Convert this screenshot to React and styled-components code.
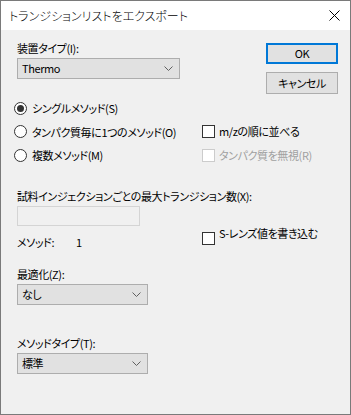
import React from "react";
import styled, { createGlobalStyle } from "styled-components";

const GlobalStyle = createGlobalStyle`
  html, body {
    margin: 0;
    padding: 0;
    background: #ffffff;
  }
  body {
    font-family: "Noto Sans CJK JP", "Noto Sans", sans-serif;
    font-size: 11px;
    font-weight: 400;
    letter-spacing: -0.4px;
    color: #000000;
    font-feature-settings: "palt";
  }
`;

const Window = styled.div`
  width: 351px;
  height: 415px;
  box-sizing: border-box;
  border: 1px solid #7a7a7a;
  background: #f0f0f0;
  display: flex;
  flex-direction: column;
`;

const TitleBar = styled.div`
  height: 29px;
  background: #ffffff;
  display: flex;
  align-items: center;
  justify-content: space-between;
  padding: 0 10px 0 8px;
  flex-shrink: 0;
`;

const Title = styled.span`
  font-size: 12px;
  font-weight: 300;
  letter-spacing: 0;
  line-height: 14px;
`;

const CloseIcon = styled.svg`
  width: 11px;
  height: 11px;
  display: block;
`;

const Body = styled.div`
  padding: 11px 12px 0 16px;
  display: flex;
  flex-direction: column;
`;

const TopRow = styled.div`
  display: flex;
  justify-content: space-between;
  align-items: flex-start;
`;

const Field = styled.div`
  display: flex;
  flex-direction: column;
  margin-top: ${(p) => p.$top || 0}px;
`;

const Label = styled.label`
  line-height: 15px;
  margin-bottom: ${(p) => p.$gap ?? 2}px;
  white-space: nowrap;
`;

const Combo = styled.div`
  width: ${(p) => p.$width}px;
  height: 21px;
  box-sizing: border-box;
  border: 1px solid #adadad;
  background: #e1e1e1;
  display: flex;
  align-items: center;
  justify-content: space-between;
  padding: 0 6px 0 4px;
`;

const ComboText = styled.span`
  line-height: 15px;
`;

const ButtonColumn = styled.div`
  display: flex;
  flex-direction: column;
  gap: 8px;
  margin-top: 2px;
`;

const Button = styled.button`
  width: 72px;
  height: ${(p) => (p.$primary ? 21 : 22)}px;
  box-sizing: border-box;
  border: ${(p) => (p.$primary ? "2px solid #0078d7" : "1px solid #adadad")};
  background: #e1e1e1;
  font-family: inherit;
  font-size: 11px;
  font-weight: 400;
  letter-spacing: -0.4px;
  font-feature-settings: "palt";
  color: #000;
  padding: 0;
  line-height: 15px;
`;

const OptionGrid = styled.div`
  display: grid;
  grid-template-columns: 188px 1fr;
  grid-template-rows: 24px 23px 24px;
  margin-left: -3px;
  margin-top: 2px;
`;

const Radio = styled.label`
  display: flex;
  align-items: center;
  gap: 5px;
  grid-column: 1;
  white-space: nowrap;
`;

const RadioDot = styled.span`
  width: 13px;
  height: 13px;
  box-sizing: border-box;
  border: 1px solid #333333;
  border-radius: 50%;
  background: #ffffff;
  display: flex;
  align-items: center;
  justify-content: center;
  flex-shrink: 0;

  &::after {
    content: "";
    width: 7px;
    height: 7px;
    border-radius: 50%;
    background: ${(p) => (p.$checked ? "#333333" : "transparent")};
  }
`;

const Check = styled.label`
  display: flex;
  align-items: ${(p) => (p.$top ? "flex-start" : "center")};
  gap: 4px;
  grid-column: 2;
  white-space: nowrap;
  color: ${(p) => (p.$disabled ? "#a0a0a0" : "#000000")};
`;

const Box = styled.span`
  width: 13px;
  height: 13px;
  box-sizing: border-box;
  border: 1px solid ${(p) => (p.$disabled ? "#cccccc" : "#333333")};
  background: #ffffff;
  flex-shrink: 0;
  margin-top: ${(p) => p.$offset || 0}px;
`;

const CheckText = styled.span`
  line-height: 15px;
`;

const TextBox = styled.div`
  width: 123px;
  height: 20px;
  box-sizing: border-box;
  border: 1px solid #d4d4d4;
  background: #f0f0f0;
`;

const CountRow = styled.div`
  display: grid;
  grid-template-columns: 185px 1fr;
  margin-top: 0;
`;

const MethodCount = styled.div`
  display: flex;
  padding-top: 9px;
  line-height: 15px;
`;

const CountLabel = styled.span`
  width: 59px;
`;

const Chevron = () => (
  <svg width="9" height="5" viewBox="0 0 9 5">
    <path d="M0.5 0.5 L4.5 4.5 L8.5 0.5" fill="none" stroke="#606060" strokeWidth="1" />
  </svg>
);

export default function App() {
  return (
    <>
      <GlobalStyle />
      <Window>
        <TitleBar>
          <Title>トランジションリストをエクスポート</Title>
          <CloseIcon viewBox="0 0 11 11">
            <path d="M0.5 0.5 L10.5 10.5 M10.5 0.5 L0.5 10.5" stroke="#000" strokeWidth="1" />
          </CloseIcon>
        </TitleBar>
        <Body>
          <TopRow>
            <Field>
              <Label>装置タイプ(I):</Label>
              <Combo $width={163}>
                <ComboText>Thermo</ComboText>
                <Chevron />
              </Combo>
            </Field>
            <ButtonColumn>
              <Button $primary>OK</Button>
              <Button>キャンセル</Button>
            </ButtonColumn>
          </TopRow>

          <OptionGrid>
            <Radio>
              <RadioDot $checked />
              シングルメソッド(S)
            </Radio>
            <Radio>
              <RadioDot />
              タンパク質毎に1つのメソッド(O)
            </Radio>
            <Check>
              <Box />
              <CheckText>m/zの順に並べる</CheckText>
            </Check>
            <Radio>
              <RadioDot />
              複数メソッド(M)
            </Radio>
            <Check $disabled>
              <Box $disabled />
              <CheckText>タンパク質を無視(R)</CheckText>
            </Check>
          </OptionGrid>

          <Field $top={22}>
            <Label>試料インジェクションごとの最大トランジション数(X):</Label>
            <TextBox />
          </Field>

          <CountRow>
            <MethodCount>
              <CountLabel>メソッド:</CountLabel>
              <span>1</span>
            </MethodCount>
            <Check $top>
              <Box $offset={6} />
              <CheckText>S-レンズ値を書き込む</CheckText>
            </Check>
          </CountRow>

          <Field $top={17}>
            <Label>最適化(Z):</Label>
            <Combo $width={131}>
              <ComboText>なし</ComboText>
              <Chevron />
            </Combo>
          </Field>

          <Field $top={31}>
            <Label>メソッドタイプ(T):</Label>
            <Combo $width={131}>
              <ComboText>標準</ComboText>
              <Chevron />
            </Combo>
          </Field>
        </Body>
      </Window>
    </>
  );
}
